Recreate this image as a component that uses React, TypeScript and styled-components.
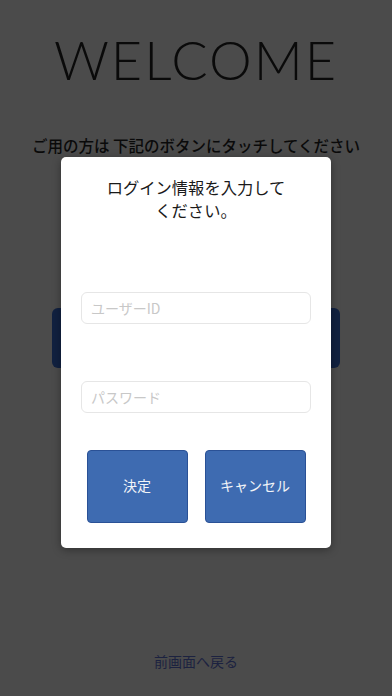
import React from "react";
import styled, { createGlobalStyle } from "styled-components";

const Global = createGlobalStyle`
  html, body { margin: 0; padding: 0; background: #4b4b4b; }
  body { font-family: "Noto Sans CJK JP", "Noto Sans", sans-serif; }
  * { box-sizing: border-box; }
`;

const Page = styled.div`
  position: relative;
  width: 392px;
  height: 696px;
  background: #4b4b4b;
  overflow: hidden;
  display: flex;
  flex-direction: column;
  align-items: center;
`;

const Title = styled.h1`
  margin: 33px 0 0;
  font-family: "Lato", "DejaVu Sans", sans-serif;
  font-weight: 300;
  font-size: 54px;
  line-height: 54px;
  letter-spacing: 2px;
  color: #0a0a0a;
`;

const Subtitle = styled.p`
  margin: 48px 0 0;
  font-size: 15.5px;
  font-weight: 500;
  line-height: 20px;
  color: #0a0a0a;
  white-space: nowrap;
`;

const BigButton = styled.div`
  margin-top: 153px;
  width: 288px;
  height: 60px;
  border-radius: 6px;
  background: #112140;
`;

const BackLink = styled.a`
  margin-top: auto;
  margin-bottom: 26px;
  font-size: 14px;
  line-height: 18px;
  color: #1c2240;
  text-decoration: none;
`;

const Overlay = styled.div`
  position: absolute;
  inset: 0;
  display: flex;
  justify-content: center;
  align-items: flex-start;
  padding-top: 157px;
`;

const Dialog = styled.div`
  width: 270px;
  height: 391px;
  background: #ffffff;
  border-radius: 5px;
  box-shadow: 0 2px 8px rgba(0, 0, 0, 0.35);
  display: flex;
  flex-direction: column;
  align-items: center;
  padding: 19px 0 0;
`;

const DialogTitle = styled.div`
  width: 186px;
  text-align: center;
  font-size: 16.3px;
  line-height: 23px;
  color: #1a1a1a;
`;

const Field = styled.input<{ $gap: number }>`
  margin-top: ${(p) => p.$gap}px;
  width: 230px;
  height: 32px;
  border: 1px solid #e6e6e6;
  border-radius: 6px;
  padding: 0 9px;
  font-family: "Noto Sans CJK JP", "Noto Sans", sans-serif;
  font-size: 14px;
  outline: none;
  background: #fff;
  &::placeholder { color: #c8c8c8; }
`;

const ButtonRow = styled.div`
  margin-top: 37px;
  display: flex;
  gap: 17px;
`;

const ActionButton = styled.button`
  width: 101px;
  height: 73px;
  background: #3e6bb1;
  border: 1px solid #2a5196;
  border-radius: 4px;
  color: #f2f4f8;
  font-family: "Noto Sans CJK JP", "Noto Sans", sans-serif;
  font-size: 14px;
  padding: 0 0 4px;
`;

export default function App() {
  return (
    <>
      <Global />
      <Page>
        <Title>WELCOME</Title>
        <Subtitle>ご用の方は 下記のボタンにタッチしてください</Subtitle>
        <BigButton />
        <BackLink href="#">前画面へ戻る</BackLink>
        <Overlay>
          <Dialog>
            <DialogTitle>ログイン情報を入力してください。</DialogTitle>
            <Field $gap={70} placeholder="ユーザーID" />
            <Field $gap={57} type="password" placeholder="パスワード" />
            <ButtonRow>
              <ActionButton>決定</ActionButton>
              <ActionButton>キャンセル</ActionButton>
            </ButtonRow>
          </Dialog>
        </Overlay>
      </Page>
    </>
  );
}
